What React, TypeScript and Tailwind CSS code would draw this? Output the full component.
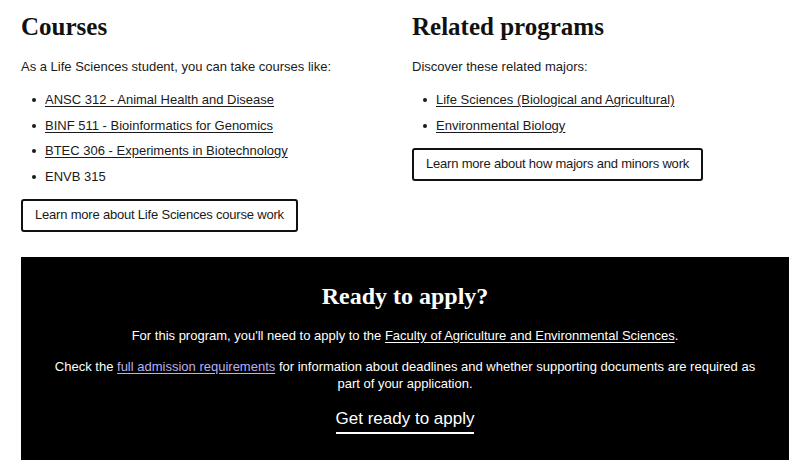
const courses = [
  { label: "ANSC 312 - Animal Health and Disease", link: true },
  { label: "BINF 511 - Bioinformatics for Genomics", link: true },
  { label: "BTEC 306 - Experiments in Biotechnology", link: true },
  { label: "ENVB 315", link: false },
];

const related = ["Life Sciences (Biological and Agricultural)", "Environmental Biology"];

const sans = "font-['Liberation_Sans',Arial,sans-serif]";
const serif = "font-['Liberation_Serif','Times_New_Roman',serif]";

function Bullets({ items }: { items: { label: string; link: boolean }[] }) {
  return (
    <ul className="mt-[16px] flex flex-col gap-[8.5px] pl-[24px]">
      {items.map((it) => (
        <li key={it.label} className="relative h-[17px] leading-[17px]">
          <span className="absolute -left-[13px] top-[7px] h-[4px] w-[4px] rounded-full bg-[#1a1a1a]" />
          {it.link ? (
            <a href="#" className="underline underline-offset-2">
              {it.label}
            </a>
          ) : (
            it.label
          )}
        </li>
      ))}
    </ul>
  );
}

function OutlineButton({ children }: { children: React.ReactNode }) {
  return (
    <a
      href="#"
      className="inline-flex h-[33px] items-center rounded-[3px] border-2 border-[#111] px-[12px] text-[13px] tracking-[-0.2px]"
    >
      {children}
    </a>
  );
}

export default function App() {
  return (
    <div className={`${sans} min-h-[470px] w-[800px] bg-white pl-[21px] pr-[11px] text-[13px] text-[#1a1a1a]`}>
      <div className="grid grid-cols-2 gap-x-[14px] pt-[12px]">
        <section>
          <h2 className={`${serif} text-[25px] font-bold leading-[30px] text-[#111]`}>Courses</h2>
          <p className="mt-[16px] leading-[17px]">As a Life Sciences student, you can take courses like:</p>
          <Bullets items={courses} />
          <div className="mt-[14px]">
            <OutlineButton>Learn more about Life Sciences course work</OutlineButton>
          </div>
        </section>
        <section>
          <h2 className={`${serif} text-[25px] font-bold leading-[30px] text-[#111]`}>Related programs</h2>
          <p className="mt-[16px] leading-[17px]">Discover these related majors:</p>
          <Bullets items={related.map((label) => ({ label, link: true }))} />
          <div className="mt-[14px]">
            <OutlineButton>Learn more about how majors and minors work</OutlineButton>
          </div>
        </section>
      </div>

      <section className="mt-[25px] flex h-[203px] flex-col items-center bg-black px-[24px] pt-[24px] text-center text-white">
        <h2 className={`${serif} text-[24px] font-bold leading-[30px]`}>Ready to apply?</h2>
        <p className="mt-[16px] leading-[17px]">
          For this program, you'll need to apply to the{" "}
          <a href="#" className="underline underline-offset-2">
            Faculty of Agriculture and Environmental Sciences
          </a>
          .
        </p>
        <p className="mt-[14px] leading-[17px]">
          Check the{" "}
          <a href="#" className="text-[#b9aff2] underline underline-offset-2">
            full admission requirements
          </a>{" "}
          for information about deadlines and whether supporting documents are required as part of your application.
        </p>
        <a href="#" className="mt-[17px] border-b-2 border-white pb-[3px] text-[17px] leading-[20px]">
          Get ready to apply
        </a>
      </section>
    </div>
  );
}
